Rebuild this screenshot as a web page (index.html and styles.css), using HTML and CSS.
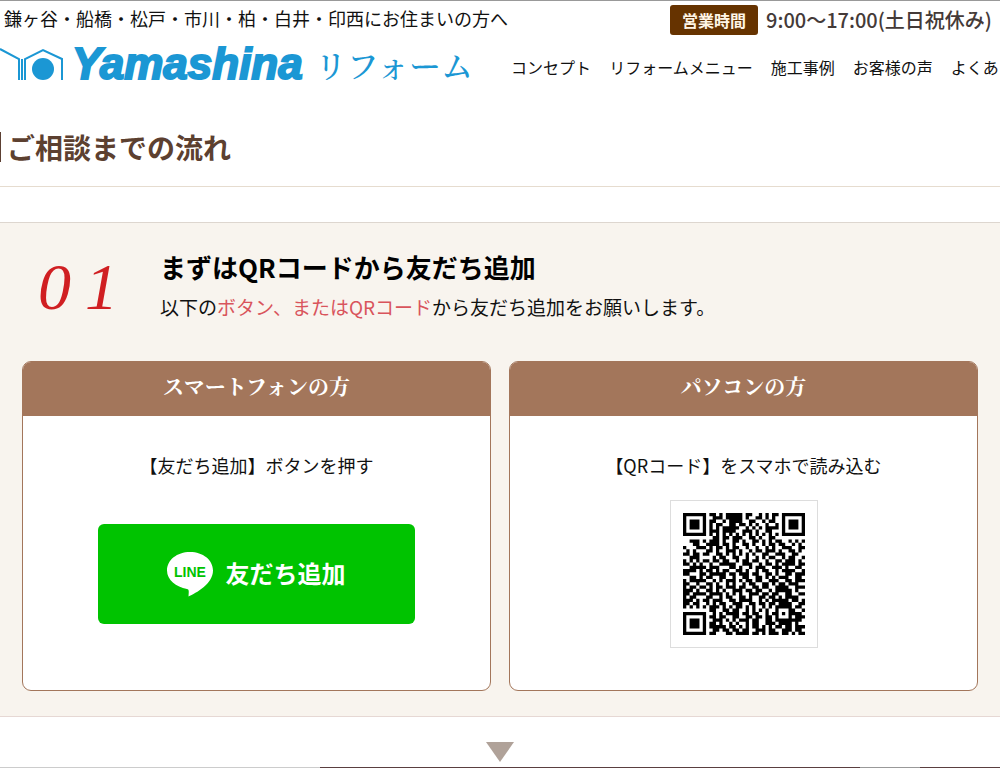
FILE: index.html
```
<!DOCTYPE html>
<html lang="ja">
<head>
    <meta charset="UTF-8">
    <meta name="viewport" content="width=device-width, initial-scale=1.0">
    <title>ご相談までの流れ | Yamashina リフォーム</title>
    <link rel="stylesheet" href="styles.css">
</head>
<body>
    <header class="header">
        <div class="header-top">
            <p class="area">鎌ヶ谷・船橋・松戸・市川・柏・白井・印西にお住まいの方へ</p>
            <p class="hours"><span class="hours-label">営業時間</span>9:00〜17:00(土日祝休み)</p>
        </div>
        <div class="header-main">
            <a href="#" class="logo">
                <svg class="logo-mark" viewBox="0 0 64 34" width="64" height="34">
                    <path d="M0 2L19 12V33M22 33V12M25 33V12L43 3L62 12V33" fill="none" stroke="#1b97d4" stroke-width="2"></path>
                    <circle cx="43" cy="22" r="11" fill="#1b97d4"></circle>
                </svg>
                <span class="logo-name">Yamashina</span>
                <span class="logo-sub">リフォーム</span>
            </a>
            <nav class="nav">
                <a href="#">コンセプト</a>
                <a href="#">リフォームメニュー</a>
                <a href="#">施工事例</a>
                <a href="#">お客様の声</a>
                <a href="#">よくある質問</a>
            </nav>
        </div>
    </header>

    <main>
        <div class="title-area">
            <h1 class="title">ご相談までの流れ</h1>
        </div>

        <section class="step">
            <div class="step-head">
                <div class="step-num"><span>0</span><span>1</span></div>
                <div class="step-text">
                    <h2>まずはQRコードから友だち追加</h2>
                    <p>以下の<span class="red">ボタン、またはQRコード</span>から友だち追加をお願いします。</p>
                </div>
            </div>
            <div class="panels">
                <div class="panel">
                    <h3>スマートフォンの方</h3>
                    <p>【友だち追加】ボタンを押す</p>
                    <a href="#" class="line-btn">
                        <svg class="line-icon" viewBox="0 0 46 45" width="46" height="45">
                            <path d="M23 0C10 0 0 8 0 18.500C0 28 9 35 20 37C22 37.500 22 38.500 21.500 44.500C29 41 46 32 46 18.500C46 8 36 0 23 0z" fill="#fff"></path>
                            <text x="23" y="25" text-anchor="middle" class="line-word">LINE</text>
                        </svg>
                        <span class="line-label">友だち追加</span>
                    </a>
                </div>
                <div class="panel">
                    <h3>パソコンの方</h3>
                    <p>【QRコード】をスマホで読み込む</p>
                    <div class="qr-frame">
                        <svg class="qr" viewBox="0 0 37 37" role="img" aria-label="QRコード">
                            <path id="qr-path" d=""></path>
                        </svg>
                    </div>
                </div>
            </div>
        </section>

        <div class="next">
            <svg viewBox="0 0 28 20" width="28" height="20"><path d="M0 0H28L14 20z" fill="#b0a299"></path></svg>
        </div>
        <div class="photo-line"></div>
    </main>
    <script src="qr.js"></script>
</body>
</html>
```
FILE: styles.css
```
* {
    box-sizing: border-box;
}
body {
    margin: 0;
    font-family: "Noto Sans CJK JP", sans-serif;
    color: #111;
    background-color: #fff;
    overflow-x: hidden;
}
h1, h2, h3, p {
    margin: 0;
}
a {
    color: inherit;
    text-decoration: none;
}

/* Header */
.header {
    border-top: 1px solid #999;
}
.header-top {
    display: flex;
    justify-content: space-between;
    align-items: center;
    height: 38px;
    padding: 0 8px 0 4px;
    white-space: nowrap;
}
.area {
    padding-bottom: 4px;
    font-size: 18px;
    line-height: 32px;
}
.hours {
    display: flex;
    align-items: center;
    gap: 8px;
    font-size: 20px;
    font-weight: 500;
    line-height: 30px;
    color: #443a38;
}
.hours-label {
    padding: 0 12px;
    border-radius: 3px;
    background-color: #663300;
    color: #fff5e6;
    font-size: 16px;
    font-weight: bold;
}
.header-main {
    display: flex;
    align-items: center;
    gap: 38px;
    height: 56px;
}
.logo {
    display: flex;
    align-items: center;
    gap: 8px;
    padding-bottom: 6px;
    color: #1b97d4;
    white-space: nowrap;
}
.logo-name {
    padding-right: 4px;
    font-family: "Liberation Sans", Arial, sans-serif;
    font-size: 44px;
    font-weight: bold;
    font-style: italic;
    line-height: 48px;
    -webkit-text-stroke: 2px #1b97d4;
}
.logo-sub {
    font-family: "Noto Serif CJK JP", "Noto Sans CJK JP", serif;
    font-size: 32px;
    font-weight: 500;
    line-height: 48px;
}
.nav {
    display: flex;
    gap: 18px;
    font-size: 16px;
    line-height: 24px;
    white-space: nowrap;
}

/* Page title */
.title-area {
    padding: 37px 0 24px;
    border-bottom: 1px solid #e6dccf;
}
.title {
    padding-left: 6px;
    border-left: 1px solid #5c4033;
    font-size: 28px;
    line-height: 30px;
    color: #5c4030;
}

/* Step */
.step {
    margin-top: 35px;
    padding: 24px 22px 25px;
    border-top: 1px solid #ddd6cf;
    border-bottom: 1px solid #e6d8d4;
    background-color: #f8f4ee;
}
.step-head {
    display: flex;
    align-items: center;
    gap: 42px;
    padding-left: 16px;
}
.step-num {
    display: flex;
    gap: 14px;
    font-family: "Liberation Serif", "Times New Roman", serif;
    font-size: 66px;
    font-style: italic;
    line-height: 80px;
    color: #d01f22;
}
.step-text h2 {
    font-size: 26px;
    line-height: 40px;
    color: #000;
}
.step-text p {
    font-size: 19px;
    line-height: 40px;
}
.red {
    color: #d9545c;
}
.panels {
    display: grid;
    grid-template-columns: 1fr 1fr;
    gap: 18px;
    margin-top: 34px;
}
.panel {
    min-height: 330px;
    border: 1px solid #a3765b;
    border-radius: 9px;
    background-color: #fff;
    overflow: hidden;
    text-align: center;
}
.panel h3 {
    padding: 8px 0 16px;
    background-color: #a3765b;
    color: #fff;
    font-family: "Noto Serif CJK JP", "Noto Sans CJK JP", serif;
    font-size: 21px;
    line-height: 30px;
}
.panel p {
    padding: 34px 0 20px;
    font-size: 18px;
    line-height: 30px;
}
.line-btn {
    display: flex;
    justify-content: center;
    align-items: center;
    gap: 12px;
    width: 68%;
    height: 100px;
    margin: 24px auto 0;
    border-radius: 6px;
    background-color: #00c300;
    color: #fff;
    font-size: 24px;
    font-weight: bold;
}
.line-label {
    padding-bottom: 4px;
}
.line-word {
    fill: #00c300;
    font-family: "Liberation Sans", Arial, sans-serif;
    font-size: 14px;
    font-weight: bold;
}
.qr-frame {
    width: 148px;
    margin: 0 auto;
    padding: 12px;
    border: 1px solid #ddd;
}
.qr {
    display: block;
    width: 100%;
}

/* Arrow to the next step */
.next {
    display: flex;
    justify-content: center;
    padding: 25px 0 5px;
}
.photo-line {
    height: 1px;
    background: linear-gradient(to right, #ccc 32%, #5a3f40 32%, #5a3f40 86%, #999 86%, #999 92%, #5a3f40 92%);
}
```
FILE: qr.js
```
// one string per module row, # is dark
const rows = [
    '#######.##.#.#####.##..#.#.##.#######',
    '#.....#..###.#####.#..##.#.#..#.....#',
    '#.###.#.##..#.####..##..#.##..#.###.#',
    '#.###.#.#.##..##.##.#.#..#..#.#.###.#',
    '#.###.#.#.#.#####..#.#.#.####.#.###.#',
    '#.....#.###.####..###.#..##...#.....#',
    '#######.#.#.#.#.#.#.#.#.#.#.#.#######',
    '.........##.##.###..##.#..##.........',
    '..###.#.###.#..##.#..##.#.#.##..#.#.#',
    '...##..####.##.#..##.#..#.##.##..#.#.',
    '#...###.#.##.#.##..#..#..#.#..###..##',
    '.#.#...##.#..###.#..#.##.###.#..##.#.',
    '##.##.##..##.#.#.#.#.#..##..###..##..',
    '..###....#.##..##..#..#.#.##..#.##..#',
    '#.#.#.##.##.##..#.##.##..#..##.###.#.',
    '##.#.#..#..#####..###..#.##.#.####.##',
    '..#####.###...##.#..#.###..###.#..##.',
    '####.#.##.#.##..##.#..#.##..#.####..#',
    '##...##.#####.##.###.##..##.#..##.###',
    '..##.#.##..##..#..##..##.#.#.###..##.',
    '#.#####..#.#.###.#.##.##..###..##.###',
    '##..#..##.#..#.#..#.##..##.#.##.###..',
    '#.##.##.#.##.###.##..##.##..####..###',
    '###.#..##.#.#..###.##.##..#.#####.#..',
    '##.####.####.#.#.#..###.##.##..##..##',
    '#.##...##..#.##..##.#..##.##.#.####..',
    '###.#.##.###..##.####..#.#.#####.##.#',
    '##.##..#.#.##..###..##.##.##.####..##',
    '#.#.#.#.###.#.#.##.#.#..#.#.#####.##.',
    '........##..##.##..#.#.#.#..#...##..#',
    '#######..#.#.####.##.##..#.##.#.####.',
    '#.....#.##.##..##..##.##.##.#...#.###',
    '#.###.#..###.#.#.###.##..##.########.',
    '#.###.#.##.#..#.#..#.##..###.####.#..',
    '#.###.#.#####.##.#.#.##.#.#.##.##.###',
    '#.....#..##.##.##.##..###.##..###.##.',
    '#######.##...##.####.##.#.###.##.#.##'
];

let d = '';
rows.forEach(function (row, y) {
    for (let x = 0; x < row.length; x++) {
        if (row[x] === '#') d += 'M' + x + ' ' + y + 'h1v1h-1z';
    }
});
document.getElementById('qr-path').setAttribute('d', d);
```
